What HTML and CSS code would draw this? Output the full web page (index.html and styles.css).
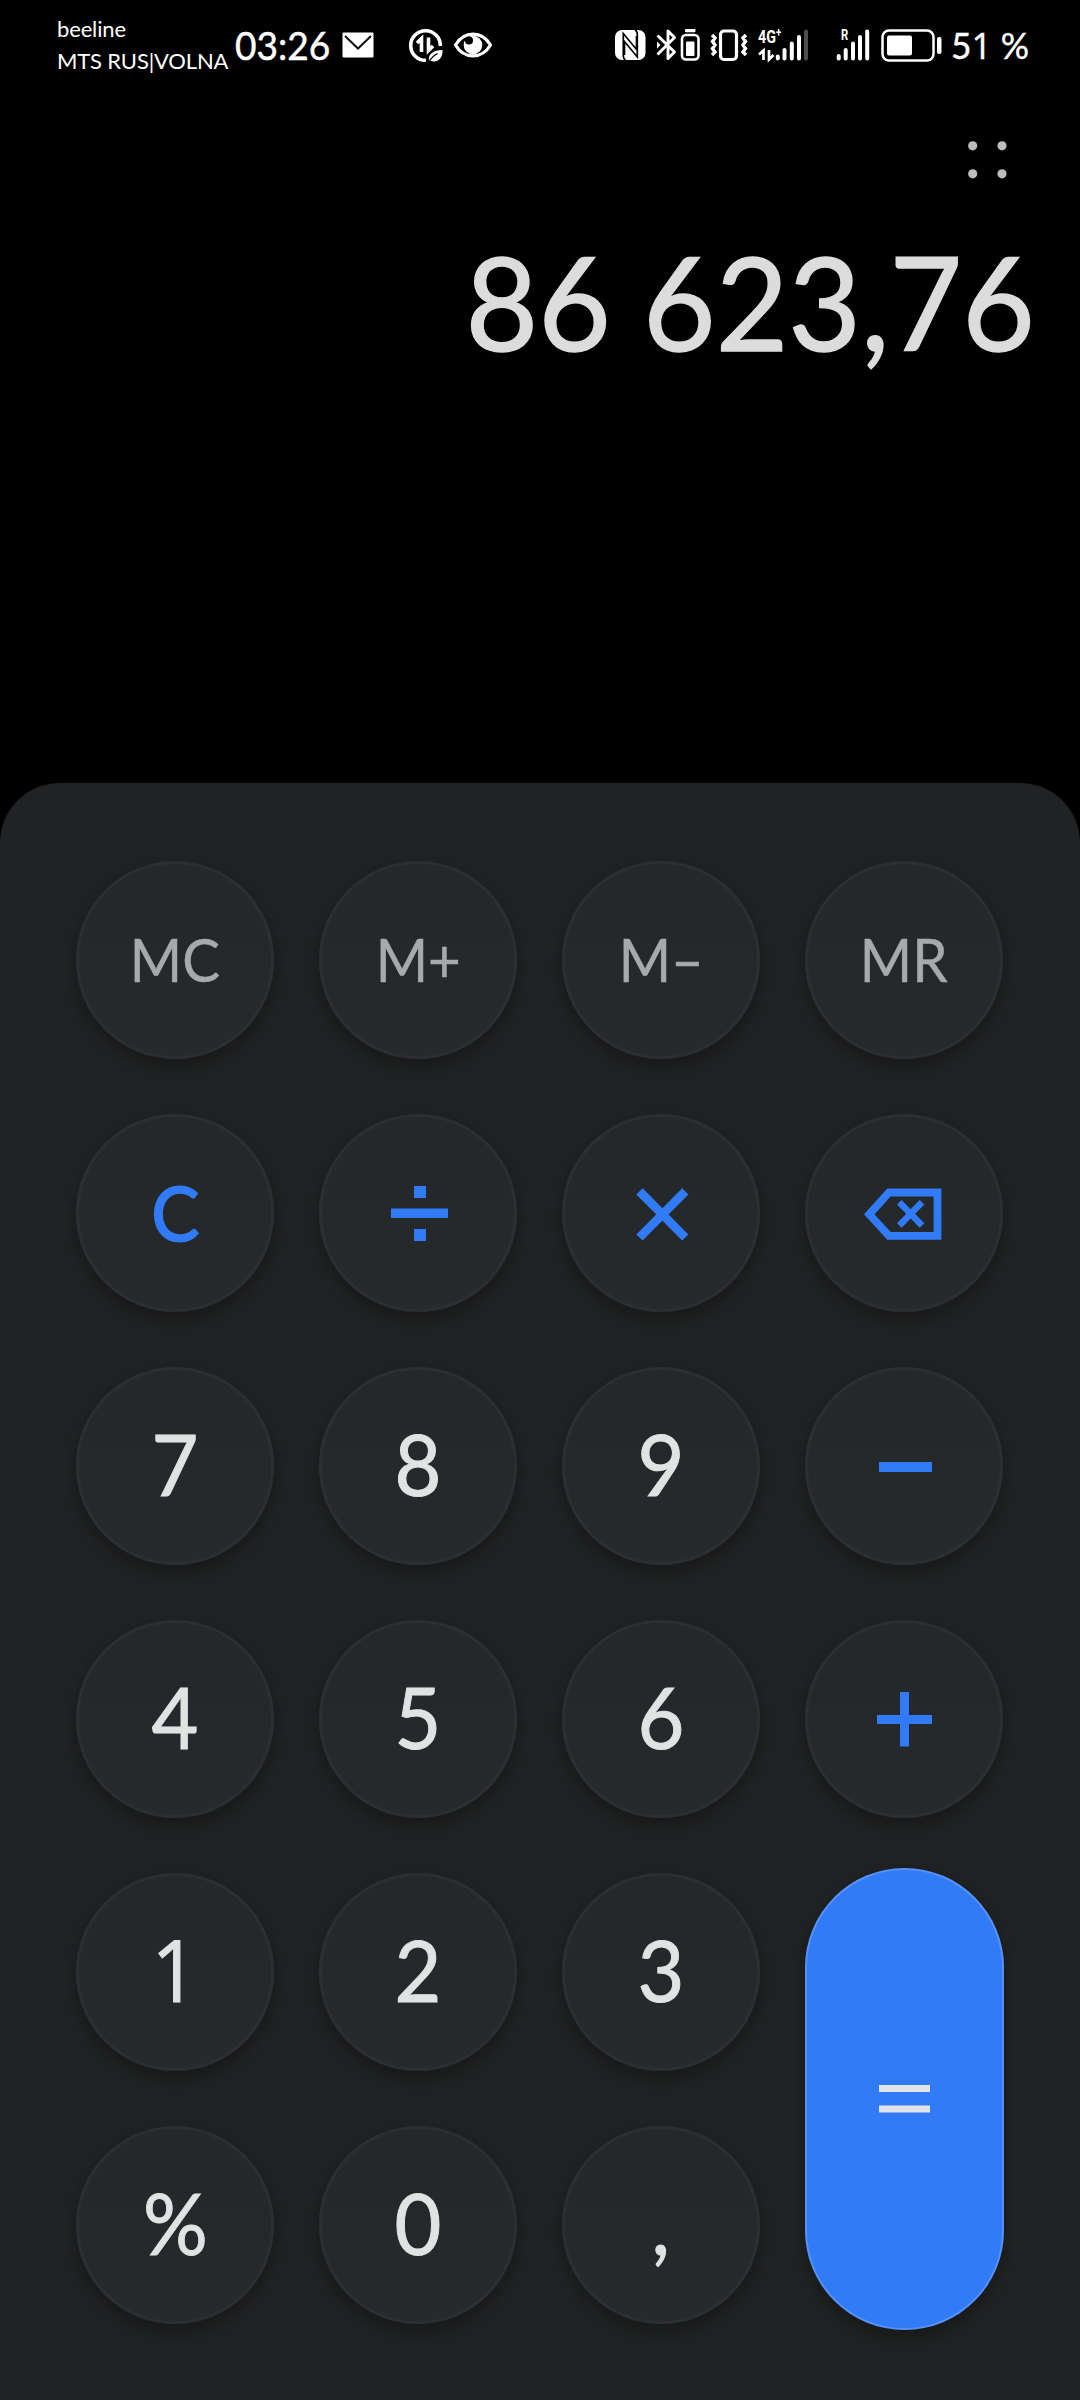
FILE: index.html
```html
<!DOCTYPE html>
<html lang="ru">

<head>
  <meta charset="UTF-8">
  <meta name="viewport" content="width=device-width, initial-scale=1.0">
  <title>Calculator</title>
  <link rel="stylesheet" href="styles.css">
</head>

<body>
  <div class="status">
    <div class="carriers">
      <span class="carrier first">beeline</span>
      <span class="carrier">MTS RUS|VOLNA</span>
    </div>
    <span class="clock">03:26</span>
    <!-- mail -->
    <svg class="mail" width="32" height="36" viewBox="342 28 32 36">
      <rect x="342.5" y="32.5" width="31" height="25" rx="1" fill="#fff" />
      <path d="M345 36L358 48.500L371 36" fill="none" stroke="#111" stroke-width="2" />
    </svg>
    <!-- data saver -->
    <svg class="saver" width="36" height="36" viewBox="408 28 36 36">
      <path d="M426 60.300A14.800 14.800 0 1 1 440.300 46" fill="none" stroke="#fff" stroke-width="3.600" />
      <path d="M417 43L421.500 38.500V52M428.500 37.500V50.500L433 46" fill="none" stroke="#fff" stroke-width="3.600" />
      <path d="M429 61C428 54 433 50 442.500 50C443 58 438 63 431 61Z" fill="#fff" />
      <path d="M429 62C431 58 434 55.500 437.500 53.500" fill="none" stroke="#000" stroke-width="1.300" />
    </svg>
    <!-- eye comfort -->
    <svg class="eye" width="40" height="36" viewBox="453 28 40 36">
      <path d="M455.500 45C464 30.500 482 30.500 490.500 45C482 59.500 464 59.500 455.500 45Z" fill="none" stroke="#fff" stroke-width="3.200" stroke-linejoin="round" />
      <circle cx="473" cy="45" r="9.300" fill="#fff" />
      <circle cx="469" cy="40.500" r="4" fill="#000" />
    </svg>
    <!-- nfc -->
    <svg class="nfc" width="31" height="36" viewBox="615 28 31 36">
      <rect x="615" y="30" width="30.500" height="30" rx="7" fill="#fff" />
      <path d="M625.500 60C623.500 59 623.300 58 623.300 56V33.500L636.500 49.500V36M635 30C637 31 637.300 32 637.300 34V57L624.500 41.500V55" fill="none" stroke="#000" stroke-width="1.700" />
    </svg>
    <!-- bluetooth with device battery -->
    <svg class="bluetooth" width="46" height="36" viewBox="655 28 46 36">
      <path d="M657.500 35.500L674.500 52L668 58.500V31L674.500 37.500L657.500 54.500" fill="none" stroke="#fff" stroke-width="2.900" stroke-linejoin="round" />
      <path d="M657 41.500L660.500 45L657 48.500Z" fill="#fff" />
      <rect x="685" y="29" width="10.500" height="3.200" rx="1" fill="#fff" />
      <rect x="682" y="35" width="16.500" height="24.500" rx="4" fill="none" stroke="#fff" stroke-width="2.600" />
      <rect x="686" y="41.500" width="8.500" height="14.500" rx="1" fill="#fff" />
    </svg>
    <!-- vibration -->
    <svg class="vibrate" width="40" height="36" viewBox="709 28 40 36">
      <rect x="720.500" y="31" width="16" height="28.500" rx="3.500" fill="none" stroke="#fff" stroke-width="3.200" />
      <path d="M712 35L715 38L712.500 41.500L715 45L712.500 48.500L715 52L712 55M746 35L743 38L745.500 41.500L743 45L745.500 48.500L743 52L746 55" fill="none" stroke="#fff" stroke-width="3.400" />
    </svg>
    <div class="network">
      <span class="network-type">4G<sup>+</sup></span>
      <svg width="52" height="36" viewBox="758 28 52 36">
        <path d="M759 54.500L763.500 50.500V60M769 50V59.500L773.500 55" fill="none" stroke="#fff" stroke-width="2.700" />
        <path d="M777.800 56.500V58.500M784.500 50V58.500M791.800 43.500V58.500M799 37V58.500" stroke="#fff" stroke-width="4" stroke-linecap="round" />
        <path d="M806 31.500V58.500" stroke="#4d4d4d" stroke-width="4" stroke-linecap="round" />
      </svg>
    </div>
    <div class="network roaming">
      <span class="network-type">R</span>
      <svg width="36" height="36" viewBox="835 28 36 36">
        <path d="M838.700 56V58.500M845.700 50V58.500M853 43.500V58.500M860 37V58.500M867.200 31.500V58.500" stroke="#fff" stroke-width="4" stroke-linecap="round" />
      </svg>
    </div>
    <!-- battery -->
    <svg class="battery" width="62" height="36" viewBox="881 28 62 36">
      <rect x="882.500" y="30.500" width="51" height="30" rx="6.500" fill="none" stroke="#fff" stroke-width="2.500" />
      <rect x="887" y="35.500" width="25" height="20" rx="2" fill="#fff" />
      <rect x="937" y="37" width="4.500" height="17" rx="2" fill="#fff" />
    </svg>
    <span class="percent">5<span class="one">1</span> %</span>
  </div>

  <div class="toolbar">
    <svg width="40" height="40" viewBox="0 0 40 40" fill="#bdbdbd">
      <circle cx="5.700" cy="5.800" r="4.600" />
      <circle cx="35" cy="5.800" r="4.600" />
      <circle cx="5.700" cy="33.800" r="4.600" />
      <circle cx="35" cy="33.800" r="4.600" />
    </svg>
  </div>

  <div class="result">86 623,76</div>

  <div class="keypad">
    <button class="key memory"><span>MC</span></button>
    <button class="key memory"><span>M+</span></button>
    <button class="key memory"><span>M–</span></button>
    <button class="key memory"><span>MR</span></button>

    <button class="key clear"><span>C</span></button>
    <button class="key operator">
      <svg viewBox="0 0 198 198"><path d="M72 94.500H129V104H72ZM95 72H107V84H95ZM95 115H107V127H95Z" /></svg>
    </button>
    <button class="key operator">
      <svg viewBox="0 0 198 198"><path class="line" d="M77.500 77.300L123.300 123.500M123.300 77.300L77.500 123.500" stroke-width="8.800" /></svg>
    </button>
    <button class="key operator">
      <svg viewBox="0 0 198 198">
        <path class="line" d="M132.500 78.500H84L64.300 100.300L84 121.800H132.500Z" stroke-width="7.800" />
        <path class="line" d="M94.300 88.300L117 111.500M117 88.300L94.300 111.500" stroke-width="6.500" />
      </svg>
    </button>

    <button class="key"><span>7</span></button>
    <button class="key"><span>8</span></button>
    <button class="key"><span>9</span></button>
    <button class="key operator">
      <svg viewBox="0 0 198 198"><path d="M74 95H127V105H74Z" /></svg>
    </button>

    <button class="key"><span>4</span></button>
    <button class="key"><span>5</span></button>
    <button class="key"><span>6</span></button>
    <button class="key operator">
      <svg viewBox="0 0 198 198"><path d="M72 95H95V72H104V95H127V104H104V126.500H95V104H72Z" /></svg>
    </button>

    <button class="key"><span class="one">1</span></button>
    <button class="key"><span>2</span></button>
    <button class="key"><span>3</span></button>
    <button class="key equals">
      <svg viewBox="0 0 199 462"><path d="M74 217H125V224H74ZM74 237.500H125V244.500H74Z" /></svg>
    </button>

    <button class="key"><span>%</span></button>
    <button class="key"><span>0</span></button>
    <button class="key"><span>,</span></button>
  </div>
</body>

</html>
```

FILE: styles.css
```css
:root {
  --panel-color: #212223;
  --key-border: #2c2e31;
  --accent-color: #317bf7;
  --text-color: #e1e3e2;
}

body {
  margin: 0;
  display: flex;
  flex-direction: column;
  width: 1080px;
  height: 2400px;
  background-color: #000;
  font-family: Lato, "Open Sans", sans-serif;
  overflow: hidden;
}

svg {
  display: block;
  flex: none;
}

.one {
  font-family: "Open Sans", sans-serif;
}

/* status bar */
.status {
  display: flex;
  align-items: flex-start;
  height: 100px;
  box-sizing: border-box;
  padding: 28px 0 0 57px;
  color: #fff;
  white-space: nowrap;
}

.carriers {
  display: flex;
  flex-direction: column;
  width: 178px;
  margin-top: -15px;
}

.carrier {
  font-size: 22px;
  line-height: 32px;
  letter-spacing: -0.15px;
}

.clock {
  width: 107px;
  margin-top: -1px;
  font-size: 39px;
  line-height: 36px;
  transform: scaleX(0.95);
  transform-origin: left;
  -webkit-text-stroke: 0.5px currentColor;
}

.saver {
  margin-left: 34px;
}

.eye {
  margin-left: 9px;
}

.nfc {
  margin-left: 122px;
}

.bluetooth {
  margin-left: 9px;
}

.vibrate {
  margin-left: 8px;
}

.network {
  position: relative;
  margin-left: 9px;
}

.network.roaming {
  margin-left: 25px;
}

.network-type {
  position: absolute;
  left: 0;
  top: 0;
  font: bold 19px/18px Roboto, sans-serif;
  transform: scaleX(0.75);
  transform-origin: left;
}

.network-type sup {
  font-size: 13px;
  line-height: 0;
  vertical-align: 6px;
}

.roaming .network-type {
  left: 6px;
  font-size: 15px;
  line-height: 14px;
}

.battery {
  margin-left: 10px;
}

.percent {
  margin: -1px 0 0 8px;
  font-size: 36px;
  line-height: 36px;
  transform: scaleX(0.98);
  transform-origin: left;
  -webkit-text-stroke: 0.4px currentColor;
}

/* display */
.toolbar {
  display: flex;
  justify-content: flex-end;
  height: 100px;
  padding: 40px 73px 0 0;
  box-sizing: border-box;
}

.result {
  height: 583px;
  padding-right: 45px;
  font-size: 130px;
  line-height: 203px;
  text-align: right;
  color: #dcdcdc;
  transform: scaleX(0.964);
  transform-origin: 1030px 0;
  -webkit-text-stroke: 1.5px currentColor;
}

/* keypad */
.keypad {
  display: grid;
  grid-template-columns: repeat(4, 198px);
  grid-auto-rows: 198px;
  gap: 55px 45px;
  flex: 1;
  box-sizing: border-box;
  padding: 78px 76px 0;
  border-radius: 60px 60px 0 0;
  background-color: var(--panel-color);
}

.key {
  display: flex;
  align-items: center;
  justify-content: center;
  padding: 0;
  border: none;
  border-radius: 100px;
  background: linear-gradient(#24282a, #27292d);
  box-shadow: inset 0 0 0 3px var(--key-border), 0 7px 18px rgba(0, 0, 0, 0.32);
  font-family: inherit;
  font-size: 86px;
  color: var(--text-color);
}

.key span {
  padding-bottom: 7px;
  transform: scaleX(0.94);
  -webkit-text-stroke: 1px currentColor;
}

.key svg {
  width: 100%;
  height: 100%;
  fill: currentColor;
}

.key .line {
  fill: none;
  stroke: currentColor;
}

.memory {
  font-size: 60px;
  color: #a8a9aa;
}

.memory span {
  padding-bottom: 3px;
  -webkit-text-stroke-width: 0.5px;
}

.clear {
  font-size: 76px;
  color: var(--accent-color);
}

.clear span {
  padding-bottom: 3px;
  -webkit-text-stroke-width: 2px;
}

.operator {
  color: var(--accent-color);
}

.equals {
  grid-row: span 2;
  width: 199px;
  height: 462px;
  margin-top: -5px;
  background: var(--accent-color);
  box-shadow: inset 0 0 0 2px rgba(255, 255, 255, 0.18), 0 7px 18px rgba(0, 0, 0, 0.32);
  color: #e3e4e8;
}
```
